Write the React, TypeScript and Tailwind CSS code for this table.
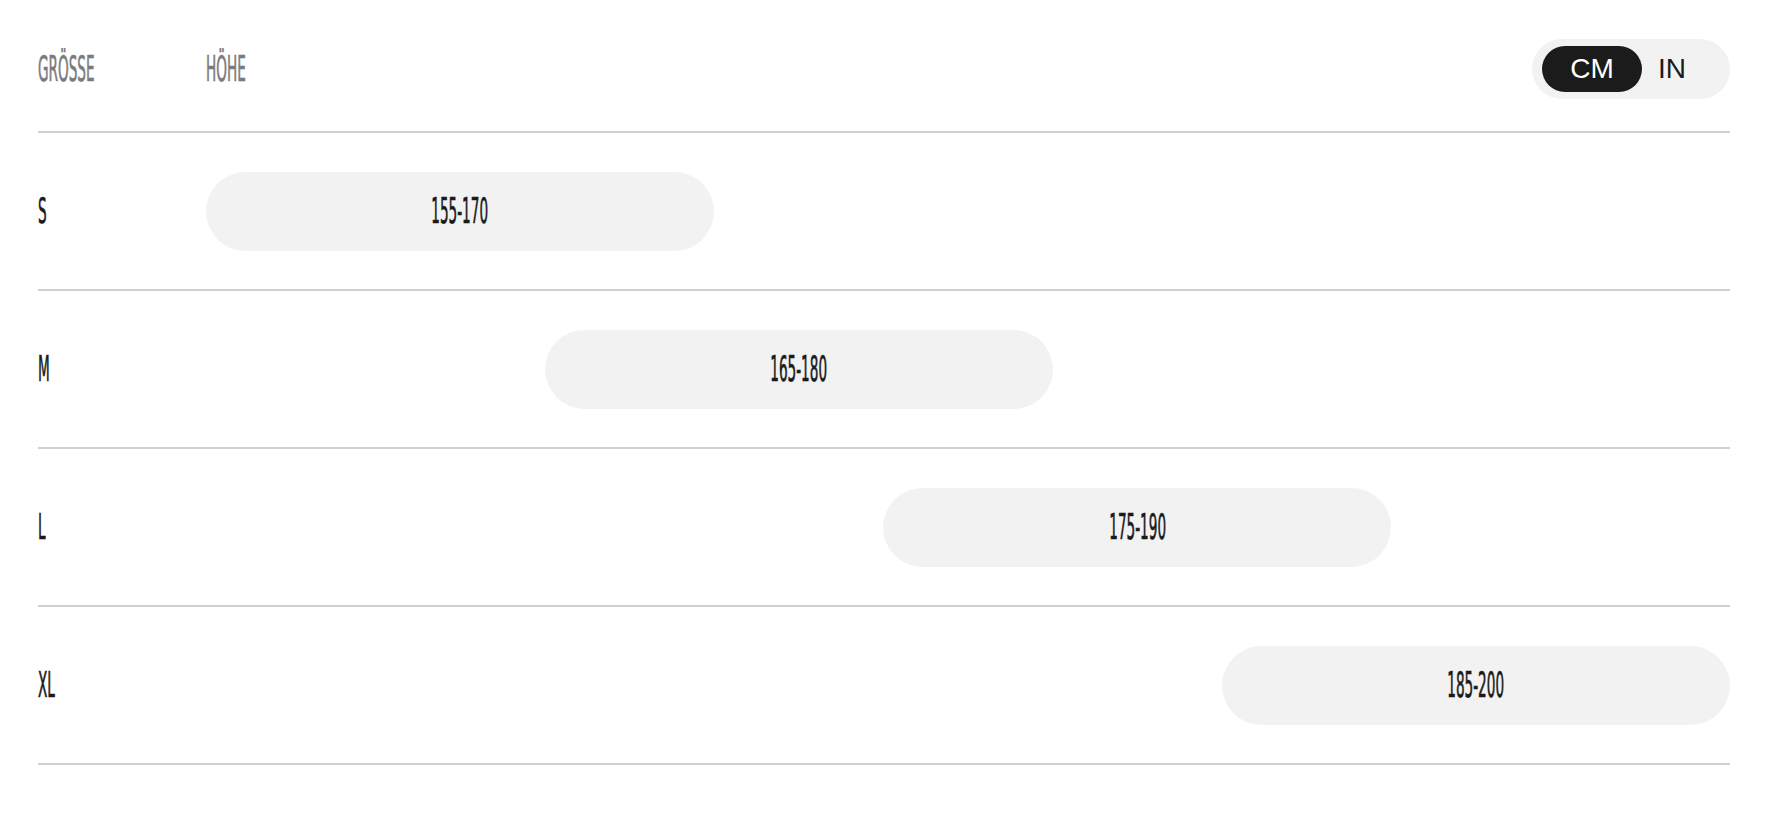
import React, { useState } from 'react';

const rows = [
  { size: 'S', range: '155-170', start: 'col-start-1' },
  { size: 'M', range: '165-180', start: 'col-start-3' },
  { size: 'L', range: '175-190', start: 'col-start-5' },
  { size: 'XL', range: '185-200', start: 'col-start-7' },
];

const condensed = "font-['DejaVu_Sans_Condensed','DejaVu_Sans',sans-serif] font-stretch-condensed font-normal text-[36px] leading-none [-webkit-text-stroke:0.7px_currentColor]";

function Narrow({ children, className = '' }: { children: React.ReactNode; className?: string }) {
  return (
    <span className={`inline-block scale-x-[0.42] ${condensed} ${className}`}>{children}</span>
  );
}

export default function App() {
  const [unit, setUnit] = useState<'cm' | 'in'>('cm');

  return (
    <div className="min-h-screen bg-white px-[38px]">
      {/* Header */}
      <div className="flex h-[133px] items-center border-b-2 border-[#d0d0d0] pt-[7px]">
        <div className="w-[168px]">
          <Narrow className="origin-left text-[#7b7b7d]">GRÖSSE</Narrow>
        </div>
        <div className="flex-1">
          <Narrow className="origin-left text-[#7b7b7d]">HÖHE</Narrow>
        </div>
        <div className="ml-auto flex h-[60px] w-[198px] items-center rounded-full bg-[#f2f2f2] px-[10px] font-['Liberation_Sans',Arial,sans-serif] text-[28px]">
          <button
            onClick={() => setUnit('cm')}
            className={`flex h-[46px] w-[100px] items-center justify-center rounded-full ${unit === 'cm' ? 'bg-[#1b1b1b] text-white' : 'text-[#1b1b1b]'}`}
          >
            CM
          </button>
          <button
            onClick={() => setUnit('in')}
            className={`flex h-[46px] items-center justify-center rounded-full px-[16px] ${unit === 'in' ? 'bg-[#1b1b1b] text-white' : 'text-[#1b1b1b]'}`}
          >
            IN
          </button>
        </div>
      </div>

      {/* Rows */}
      {rows.map((row) => (
        <div key={row.size} className="flex h-[158px] items-center border-b-2 border-[#d0d0d0]">
          <div className="w-[168px]">
            <Narrow className="origin-left text-[#1a1a1a]">{row.size}</Narrow>
          </div>
          <div className="grid flex-1 grid-cols-9">
            <div className={`${row.start} col-span-3 flex h-[79px] items-center justify-center rounded-full bg-[#f2f2f2]`}>
              <Narrow className="origin-center text-[#1a1a1a]">{row.range}</Narrow>
            </div>
          </div>
        </div>
      ))}
    </div>
  );
}
